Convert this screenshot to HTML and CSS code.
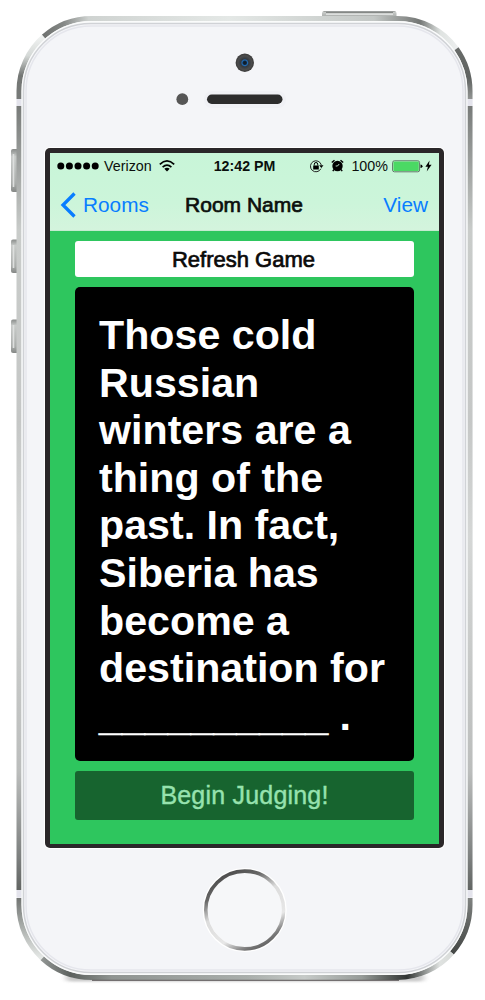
FILE: index.html
```html
<!DOCTYPE html>
<html lang="en">
<head>
<meta charset="utf-8">
<title>Room Name</title>
<link rel="stylesheet" href="styles.css">
</head>
<body>
<main class="phone">
  <svg class="chassis" viewBox="0 0 485 1000" aria-hidden="true">
    <defs>
      <linearGradient id="topEdge" gradientUnits="userSpaceOnUse" x1="43" y1="0" x2="457" y2="0">
        <stop offset="0" stop-color="#6f7270"/><stop offset=".05" stop-color="#858886"/><stop offset=".11" stop-color="#cfd3d1"/><stop offset=".45" stop-color="#e4e8e6"/><stop offset=".8" stop-color="#c3c7c5"/><stop offset=".91" stop-color="#747775"/><stop offset=".96" stop-color="#dfe3e1"/><stop offset="1" stop-color="#eceeee"/>
      </linearGradient>
      <linearGradient id="tl" gradientUnits="userSpaceOnUse" x1="0" y1="37" x2="0" y2="99">
        <stop offset="0" stop-color="#f0f2f1"/><stop offset=".3" stop-color="#d5d9d7"/><stop offset=".62" stop-color="#747775"/><stop offset="1" stop-color="#777a78"/>
      </linearGradient>
      <linearGradient id="tr" gradientUnits="userSpaceOnUse" x1="0" y1="47" x2="0" y2="99">
        <stop offset="0" stop-color="#686b69"/><stop offset=".6" stop-color="#606361"/><stop offset="1" stop-color="#929593"/>
      </linearGradient>
      <linearGradient id="side" gradientUnits="userSpaceOnUse" x1="0" y1="105" x2="0" y2="890">
        <stop offset="0" stop-color="#777a78"/><stop offset=".06" stop-color="#969997"/><stop offset=".16" stop-color="#c9ccca"/><stop offset=".4" stop-color="#c5c7c6"/><stop offset=".55" stop-color="#d5d7d6"/><stop offset=".85" stop-color="#bbbdbc"/><stop offset=".96" stop-color="#7c7f7e"/><stop offset="1" stop-color="#626563"/>
      </linearGradient>
      <linearGradient id="bl" gradientUnits="userSpaceOnUse" x1="0" y1="898" x2="0" y2="958">
        <stop offset="0" stop-color="#727573"/><stop offset=".45" stop-color="#a6aaa7"/><stop offset="1" stop-color="#e5e8e6"/>
      </linearGradient>
      <linearGradient id="br" gradientUnits="userSpaceOnUse" x1="0" y1="898" x2="0" y2="953">
        <stop offset="0" stop-color="#7f8280"/><stop offset=".4" stop-color="#666967"/><stop offset="1" stop-color="#454846"/>
      </linearGradient>
      <linearGradient id="bottomEdge" gradientUnits="userSpaceOnUse" x1="42" y1="0" x2="452" y2="0">
        <stop offset="0" stop-color="#919593"/><stop offset=".07" stop-color="#5c615e"/><stop offset=".17" stop-color="#8f9491"/><stop offset=".5" stop-color="#a9aeab"/><stop offset=".64" stop-color="#c6cac8"/><stop offset=".78" stop-color="#969b98"/><stop offset=".89" stop-color="#303432"/><stop offset=".97" stop-color="#dfe2e0"/><stop offset="1" stop-color="#d9dcda"/>
      </linearGradient>
      <linearGradient id="homeRing" gradientUnits="userSpaceOnUse" x1="222" y1="870" x2="264" y2="950">
        <stop offset="0" stop-color="#464646"/><stop offset=".22" stop-color="#666"/><stop offset=".43" stop-color="#dcdcdc"/><stop offset=".73" stop-color="#e7e7e7"/><stop offset=".9" stop-color="#777"/><stop offset="1" stop-color="#5a5a5a"/>
      </linearGradient>
      <linearGradient id="key" x1="0" y1="0" x2="0" y2="1">
        <stop offset="0" stop-color="#898c8a"/><stop offset=".18" stop-color="#c8cbc9"/><stop offset=".8" stop-color="#aaadab"/><stop offset="1" stop-color="#858886"/>
      </linearGradient>
      <radialGradient id="lens"><stop offset="0" stop-color="#101820"/><stop offset=".18" stop-color="#102438"/><stop offset=".3" stop-color="#216bb5"/><stop offset=".43" stop-color="#323940"/><stop offset=".75" stop-color="#4c4c4c"/><stop offset="1" stop-color="#393939"/></radialGradient>
      <filter id="soft" x="-10%" y="-200%" width="120%" height="500%"><feGaussianBlur stdDeviation="3 1.200"/></filter>
    </defs>

    <rect x="66" y="974" width="358" height="7.500" rx="4" fill="#777" opacity=".4" filter="url(#soft)"/>
    <g fill="url(#key)">
      <rect x="322" y="11" width="74.500" height="7" rx="2.500"/>
      <rect x="11" y="149" width="8" height="43" rx="2"/>
      <rect x="11" y="239.500" width="8" height="33.500" rx="2"/>
      <rect x="11" y="319.500" width="8" height="33.500" rx="2"/>
    </g>
    <path d="M326 12.300h67" stroke="#858886" stroke-width="1.200" fill="none"/>
    <path d="M326 14.300h67M13.500 154v33M13.500 245v23M13.500 325v23" stroke="#dddfde" stroke-width="1.600" fill="none"/>

    <rect x="17" y="16.500" width="455.500" height="963.500" rx="75" fill="#f2f3f5"/>
    <g fill="none" stroke-width="5">
      <path d="M43.500 36.700A72.500 72.500 0 0 1 91.500 18.500H397.500A72.500 72.500 0 0 1 456.500 48.800" stroke="url(#topEdge)"/>
      <path d="M43.500 36.700A72.500 72.500 0 0 0 19 91V99" stroke="url(#tl)"/>
      <path d="M456.500 48.800A72.500 72.500 0 0 1 470 91V99" stroke="url(#tr)"/>
      <path d="M19 106V890M470 106V890" stroke="url(#side)"/>
      <path d="M19 898V905A72.500 72.500 0 0 0 42.300 958.300" stroke="url(#bl)"/>
      <path d="M470 898V905A72.500 72.500 0 0 1 451.900 952.900" stroke="url(#br)"/>
      <path d="M42.300 958.300A72.500 72.500 0 0 0 91.500 977.500H397.500A72.500 72.500 0 0 0 451.900 952.900" stroke="url(#bottomEdge)"/>
    </g>
    <path d="M92 980.300H399" stroke="#5b5657" stroke-width="1"/>
    <path d="M16.500 99h6v7h-6zM466.500 99h6v7h-6zM16.500 890h6v7.500h-6zM466.500 890h6v7.500h-6z" fill="#e4e4ec"/>
    <rect x="21.500" y="21" width="446" height="954" rx="70" fill="#fafbfb"/>
    <rect x="23.500" y="23.500" width="442" height="949" rx="67.500" fill="#f4f5f8" stroke="#d0d2d6" stroke-width="1.500"/>
    <rect x="26" y="26" width="437" height="944" rx="65" fill="#f4f5f8" stroke="#e5e6ec" stroke-width="1.500"/>

    <circle cx="244.800" cy="62.800" r="9.200" fill="url(#lens)"/>
    <circle cx="182.300" cy="99.200" r="5.900" fill="#565656"/>
    <rect x="204" y="91" width="82" height="17" rx="8" fill="#f0f1f5"/>
    <rect x="207" y="94.500" width="75.500" height="9.500" rx="4.750" fill="#2d2d2d"/>
    <circle cx="244.700" cy="910" r="39.500" fill="#f6f7f9" stroke="#fff" stroke-width="5"/>
    <circle cx="244.700" cy="910" r="38.900" fill="none" stroke="url(#homeRing)" stroke-width="3.600"/>
  </svg>

  <section class="screen">
    <header class="top">
      <div class="status">
        <div class="carrier">
          <svg width="42" height="8" viewBox="0 0 42 8"><g fill="#000"><circle cx="3.800" cy="4" r="3.500"/><circle cx="12.400" cy="4" r="3.500"/><circle cx="21" cy="4" r="3.500"/><circle cx="29.600" cy="4" r="3.500"/><circle cx="38.200" cy="4" r="3.500"/></g></svg>
          <span>Verizon</span>
          <svg class="wifi" width="16" height="12" viewBox="0 0 16 12"><g fill="none" stroke="#000" stroke-width="1.700"><path d="M.8 4.300Q8-2.400 15.200 4.300"/><path d="M3.600 7.100Q8 3.100 12.400 7.100"/></g><path d="M5.300 8.800Q8 6.700 10.700 8.800L8 11.500z"/></svg>
        </div>
        <span class="clock">12:42 PM</span>
        <div class="power">
          <svg class="lock" width="15" height="14" viewBox="0 0 15 14"><path d="M11.900 9.700A5.500 5.500 0 1 1 12.300 6" fill="none" stroke="#222" stroke-width="1"/><path d="M10.200 6.300h4.300L12.300 9zM4.200 6.400h5.600v4H4.200z"/><path d="M5.300 6.500V5.200a1.700 1.700 0 0 1 3.400 0v1.300" fill="none" stroke="#000" stroke-width="1"/></svg>
          <svg class="alarm" width="13" height="13" viewBox="0 0 13 13"><circle cx="6.500" cy="7" r="5.200"/><path d="M.8 3.500L3.500 1.200M9.500 1.200l2.700 2.300" stroke="#000" stroke-width="1.500"/><path d="M3 10.500l-1.200 1.600M10 10.500l1.200 1.600" stroke="#000" stroke-width="1.400"/><path d="M8.200 5L6.500 7H4.700" fill="none" stroke="#c9f4d8" stroke-width=".9"/></svg>
          <span>100%</span>
          <svg class="battery" width="31" height="13" viewBox="0 0 31 13"><rect x=".6" y=".8" width="27" height="11" rx="1.800" fill="#d7f7e0" stroke="#5b7764" stroke-width="1"/><rect x="1.400" y="1.600" width="25.400" height="9.400" rx=".7" fill="#4bd964"/><path d="M28.500 4.500q2 0 2 1.800t-2 1.800z"/></svg>
          <svg class="bolt" width="7" height="12" viewBox="0 0 7 12"><path d="M4.600.5L.4 6.700h2.500L1.700 11.500 6.600 4.800H3.900z"/></svg>
        </div>
      </div>
      <nav class="nav">
        <a class="back"><svg width="16" height="26" viewBox="0 0 16 26"><path d="M14.500 1.500L3 13l11.500 11.500" fill="none" stroke="#087dff" stroke-width="3.300"/></svg><span>Rooms</span></a>
        <h1 class="title">Room Name</h1>
        <a class="view">View</a>
      </nav>
    </header>
    <div class="game">
      <button class="refresh">Refresh Game</button>
      <article class="card">Those cold<br>Russian<br>winters are a<br>thing of the<br>past. In fact,<br>Siberia has<br>become a<br>destination for<br><span class="blank">__________</span> .</article>
      <button class="judge">Begin Judging!</button>
    </div>
  </section>
</main>
</body>
</html>
```
FILE: styles.css
```css
* { box-sizing: border-box; }
body {
  margin: 0;
  background: #fff;
  font-family: "Liberation Sans", Arial, sans-serif;
  color: #0b0f0c;
}
svg { display: block; flex: none; }
.phone {
  position: relative;
  width: 485px;
  height: 1000px;
  padding: 148px 0 0 45px;
  overflow: hidden;
}
.chassis { position: absolute; inset: 0; width: 485px; height: 1000px; }
.screen {
  position: relative;
  width: 399px;
  height: 700px;
  padding: 5px 5px 4px;
  border-radius: 5px;
  background: #2a2729;
  box-shadow: 0 0 0 1px #fff;
  display: flex;
  flex-direction: column;
}
.top {
  height: 78px;
  background: linear-gradient(#c8f5d8, #ccf5da 65%, #d4f4dd);
  border-bottom: 1px solid #c3ebcf;
}
.status {
  display: grid;
  grid-template-columns: 1fr auto 1fr;
  align-items: center;
  height: 26px;
  padding: 0 7px 0 7px;
  font-size: 14.3px;
}
.carrier, .power { display: flex; align-items: center; }
.carrier span { margin-left: 5px; }
.wifi { margin-left: 7px; margin-top: -1px; }
.clock { font-weight: 700; font-size: 14.2px; }
.power { justify-content: flex-end; }
.alarm { margin: -1px 7px 0 7px; }
.battery { margin-left: 4px; }
.bolt { margin-left: 2px; }
.nav {
  display: grid;
  grid-template-columns: 1fr auto 1fr;
  align-items: center;
  height: 50px;
  padding: 1px 11px 0 10px;
  font-size: 20.8px;
}
.back { display: flex; align-items: center; color: #087dff; }
.back span { margin-left: 7px; }
.title {
  margin: 0;
  font-size: 21px;
  font-weight: 400;
  -webkit-text-stroke: .7px #0b0f0c;
}
.view { color: #087dff; text-align: right; }
.game {
  flex: 1;
  display: flex;
  flex-direction: column;
  padding: 10px 25px 0;
  background: #2ec65e;
}
button { border: 0; padding: 0; font-family: inherit; }
.refresh {
  height: 36px;
  padding: 2px 2px 0 0;
  border-radius: 3px;
  background: #fff;
  color: #0a0a0a;
  font-size: 22px;
  -webkit-text-stroke: .7px #0a0a0a;
}
.card {
  height: 474px;
  margin: 10px 0;
  padding: 25px 0 0 24px;
  border-radius: 5px;
  background: #000;
  color: #fff;
  font-size: 41.2px;
  font-weight: 700;
  line-height: 47.6px;
  white-space: nowrap;
}
.blank { -webkit-text-stroke: .6px #fff; }
.judge {
  height: 49px;
  border-radius: 3px;
  background: #17642f;
  color: #96e2ae;
  font-size: 25px;
  letter-spacing: .2px;
  -webkit-text-stroke: .4px #96e2ae;
}
```
